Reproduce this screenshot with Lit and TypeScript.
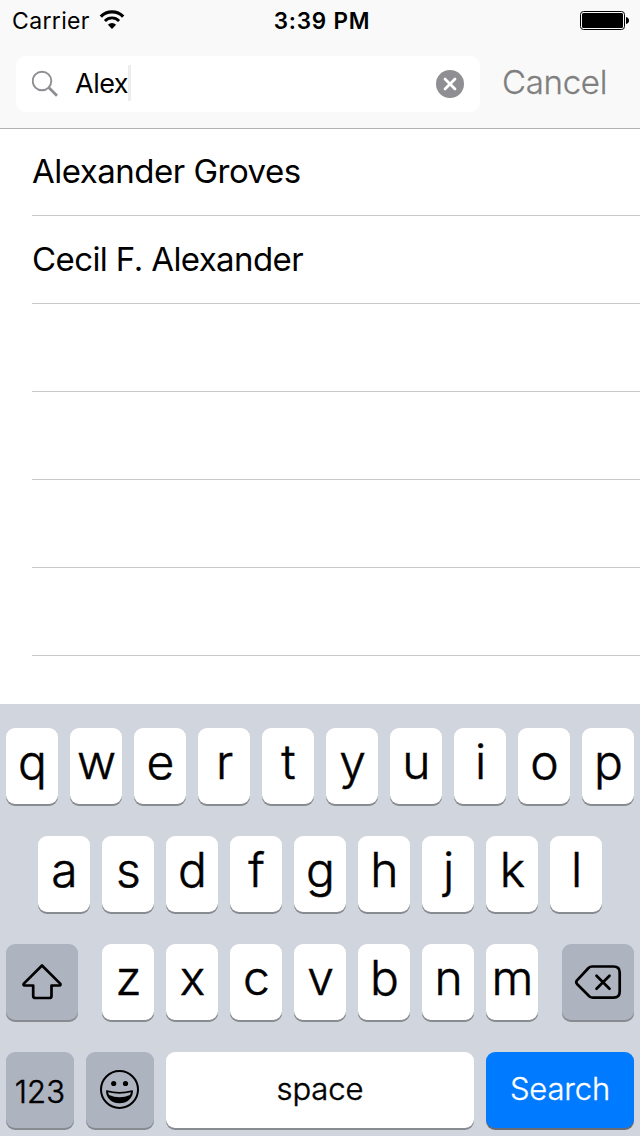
import { LitElement, html, css, svg } from "lit";
import { customElement, property } from "lit/decorators.js";

const wifiIcon = html`<svg class="wifi" width="26" height="20" viewBox="0 0 26 20">
  <path d="M1.800 6.600A15.800 15.800 0 0 1 24.200 6.600" fill="none" stroke="#000" stroke-width="3.200" />
  <path d="M5.900 10.900A10 10 0 0 1 20.100 10.900" fill="none" stroke="#000" stroke-width="2.800" />
  <path d="M13 18.900L8.900 14.700A5.800 5.800 0 0 1 17.100 14.700Z" fill="#000" />
</svg>`;

const batteryIcon = html`<svg class="battery" width="50" height="20" viewBox="0 0 50 20">
  <rect x="0.500" y="0.500" width="44" height="18" rx="3" fill="none" stroke="#000" />
  <rect x="2" y="2" width="41" height="15" rx="1.500" fill="#000" />
  <path d="M46 6C48 6.400 49 7.800 49 9.500S48 12.600 46 13Z" fill="#000" />
</svg>`;

const lensIcon = html`<svg class="lens" width="28" height="28" viewBox="0 0 28 28" fill="none" stroke="#8e8e93">
  <circle cx="10" cy="11" r="9.300" stroke-width="1.900" />
  <path d="M16.700 17.500L25 25.800" stroke-width="2.800" />
</svg>`;

const clearIcon = html`<svg width="28" height="28" viewBox="0 0 28 28">
  <circle cx="14" cy="14" r="14" fill="#8e8e93" />
  <path d="M9 9L19 19M19 9L9 19" stroke="#fff" stroke-width="2.800" stroke-linecap="round" />
</svg>`;

const glyphs: Record<string, unknown> = {
  shift: svg`<svg width="72" height="76" viewBox="0 0 72 76" fill="none" stroke="#000" stroke-width="2.700" stroke-linejoin="round">
    <path d="M36 21.500L54.200 39.600Q55 41.500 53.500 41.500H45.500V52Q45.500 54 43.500 54H29.500Q27.200 54 27.200 52V41.500H18.500Q17 41.500 17.800 39.600Z" />
  </svg>`,
  backspace: svg`<svg width="72" height="76" viewBox="0 0 72 76" fill="none" stroke="#000" stroke-width="2.700" stroke-linejoin="round" stroke-linecap="round">
    <path d="M30 22.500H51.500Q57.700 22.500 57.700 28.500V47.500Q57.700 53.700 51.500 53.700H31Q29 53.700 27.500 52.500L15 40Q13.500 38.200 15 36.400L26.500 24Q28 22.500 30 22.500Z" />
    <path d="M34.500 31.800L47.500 44.800M47.500 31.800L34.500 44.800" />
  </svg>`,
  emoji: svg`<svg width="68" height="76" viewBox="0 0 68 76">
    <circle cx="33.500" cy="37.500" r="18.500" fill="none" stroke="#000" stroke-width="2" />
    <circle cx="27.700" cy="31.500" r="2.600" />
    <circle cx="39.500" cy="31.500" r="2.600" />
    <path d="M20.800 39Q33.500 42.600 46.200 39C46 46 40.500 50.500 33.500 50.500S21 46 20.800 39Z" fill="#000" stroke="#000" stroke-width="1.600" stroke-linejoin="round" />
    <path d="M22 40.300Q33.500 43.200 45 40.300L44 43Q33.500 47.600 23 43Z" fill="#adb3bf" />
  </svg>`,
};

@customElement("keyboard-key")
class KeyboardKey extends LitElement {
  @property() label = "";
  @property({ reflect: true }) kind = "letter";

  static styles = css`
    :host {
      display: flex;
      justify-content: center;
      box-sizing: border-box;
      width: 52px;
      height: 76px;
      border-radius: 9px;
      background: #fff;
      box-shadow: 0 2px 0 #888b8f;
      color: #000;
      font-size: 48px;
      font-weight: 300;
      line-height: 67px;
      -webkit-text-stroke: 0.5px currentColor;
    }
    :host([kind="letter"]) {
      padding-left: 1px;
    }
    :host([kind="shift"]),
    :host([kind="backspace"]) {
      width: 72px;
      background: #adb3bf;
    }
    :host([kind="emoji"]),
    :host([kind="numbers"]) {
      width: 68px;
      background: #adb3bf;
    }
    :host([kind="numbers"]) {
      font-size: 31px;
      line-height: 79px;
      letter-spacing: 0.2px;
    }
    :host([kind="space"]) {
      width: 308px;
      font-size: 31px;
      line-height: 74px;
      letter-spacing: -0.1px;
    }
    :host([kind="search"]) {
      width: 148px;
      background: #007aff;
      box-shadow: 0 2px 0 #686d74;
      color: #fff;
      font-size: 31px;
      line-height: 74px;
      letter-spacing: -0.15px;
      -webkit-text-stroke-width: 0.3px;
    }
    svg {
      display: block;
    }
  `;

  render() {
    return glyphs[this.kind] ?? html`<span>${this.label}</span>`;
  }
}

@customElement("app-root")
class AppRoot extends LitElement {
  static styles = css`
    :host {
      display: flex;
      flex-direction: column;
      width: 640px;
      height: 1136px;
      overflow: hidden;
      background: #fff;
      color: #000;
      font-family: Inter, "Liberation Sans", sans-serif;
    }
    header {
      position: relative;
      z-index: 1;
      height: 129px;
      flex: none;
      box-sizing: border-box;
      border-bottom: 1px solid #b2b2b2;
      background: #f9f9f9;
    }
    .status {
      display: grid;
      grid-template-columns: 1fr auto 1fr;
      height: 40px;
      padding: 0 10px 0 12px;
      line-height: 42px;
      font-size: 23px;
    }
    .carrier {
      display: flex;
      gap: 9px;
      letter-spacing: 0.35px;
    }
    .wifi {
      margin-top: 10px;
    }
    .time {
      font-weight: 600;
      padding-left: 2px;
      letter-spacing: 0.75px;
      font-size: 22.500px;
    }
    .battery {
      justify-self: end;
      margin-top: 11px;
    }
    .search {
      display: flex;
      padding: 16px 0 0 16px;
    }
    .field {
      display: flex;
      align-items: center;
      box-sizing: border-box;
      width: 464px;
      height: 56px;
      padding: 0 16px;
      border-radius: 10px;
      background: #fff;
    }
    .query {
      margin-left: 15px;
      font-size: 27px;
      line-height: 54px;
      letter-spacing: -0.5px;
    }
    .caret {
      width: 3px;
      height: 36px;
      margin: 0 auto 2px 0;
      background: #ededf0;
    }
    .cancel {
      margin-left: 22px;
      color: #7f7f7f;
      font-size: 33px;
      font-weight: 300;
      line-height: 53px;
      letter-spacing: -0.3px;
      -webkit-text-stroke: 0.3px currentColor;
    }
    .results {
      flex: 1;
      min-height: 0;
      overflow: hidden;
      margin-top: -1px;
      padding-left: 32px;
    }
    .row {
      box-sizing: border-box;
      height: 88px;
      border-bottom: 1px solid #c8c7cc;
      font-size: 33px;
      line-height: 86px;
      letter-spacing: -0.5px;
    }
    .row:nth-child(2) {
      letter-spacing: -0.6px;
    }
    .keyboard {
      display: flex;
      flex-direction: column;
      gap: 32px;
      box-sizing: border-box;
      height: 432px;
      flex: none;
      padding: 24px 6px 0;
      background: #d1d5dd;
    }
    .keys {
      display: flex;
      justify-content: center;
      gap: 12px;
    }
    .keys.spread {
      justify-content: space-between;
    }
    .group {
      display: flex;
      gap: 12px;
    }
  `;

  private letters(row: string) {
    return [...row].map((c) => html`<keyboard-key kind="letter" label=${c}></keyboard-key>`);
  }

  render() {
    const rows = ["Alexander Groves", "Cecil F. Alexander", "", "", "", "", ""];
    return html`
      <header>
        <div class="status">
          <div class="carrier"><span>Carrier</span>${wifiIcon}</div>
          <span class="time">3:39 PM</span>
          ${batteryIcon}
        </div>
        <div class="search">
          <div class="field">
            ${lensIcon}<span class="query">Alex</span><span class="caret"></span>${clearIcon}
          </div>
          <span class="cancel">Cancel</span>
        </div>
      </header>
      <div class="results">
        ${rows.map((name) => html`<div class="row">${name}</div>`)}
      </div>
      <div class="keyboard">
        <div class="keys">${this.letters("qwertyuiop")}</div>
        <div class="keys">${this.letters("asdfghjkl")}</div>
        <div class="keys spread">
          <keyboard-key kind="shift"></keyboard-key>
          <div class="group">${this.letters("zxcvbnm")}</div>
          <keyboard-key kind="backspace"></keyboard-key>
        </div>
        <div class="keys">
          <keyboard-key kind="numbers" label="123"></keyboard-key>
          <keyboard-key kind="emoji"></keyboard-key>
          <keyboard-key kind="space" label="space"></keyboard-key>
          <keyboard-key kind="search" label="Search"></keyboard-key>
        </div>
      </div>
    `;
  }
}
